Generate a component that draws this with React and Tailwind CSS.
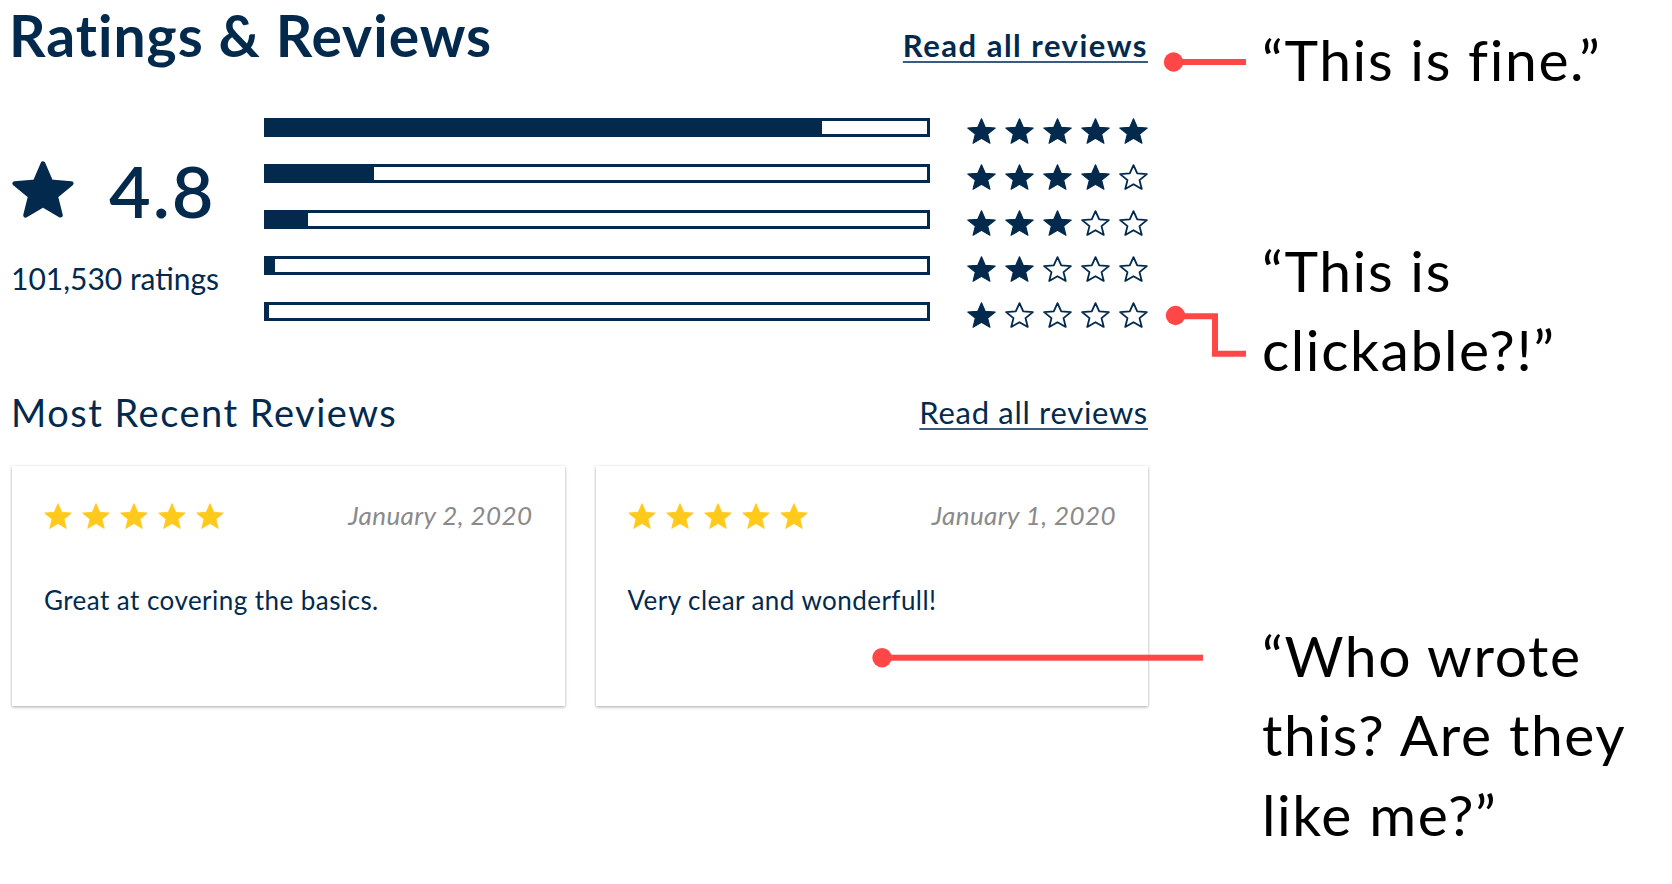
import React from 'react';

const NAVY = '#032a4d';
const STAR_D =
  'M0,-10 L2.645,-3.641 L9.511,-3.09 L4.28,1.391 L5.878,8.09 L0,4.5 L-5.878,8.09 L-4.28,1.391 L-9.511,-3.09 L-2.645,-3.641 Z';

function Star({ w, h, fill, stroke, sw = 1 }) {
  const pad = sw / 2 + 0.15;
  const vb = `${-9.511 - pad} ${-10 - pad} ${19.022 + 2 * pad} ${18.09 + 2 * pad}`;
  return (
    <svg width={w} height={h} viewBox={vb} preserveAspectRatio="none" className="shrink-0">
      <path d={STAR_D} fill={fill} stroke={stroke} strokeWidth={sw} strokeLinejoin="round" />
    </svg>
  );
}

const rows = [
  { fill: 555, stars: 5 },
  { fill: 107, stars: 4 },
  { fill: 41, stars: 3 },
  { fill: 8, stars: 2 },
  { fill: 2, stars: 1 },
];

const reviews = [
  { date: 'January 2, 2020', text: 'Great at covering the basics.' },
  { date: 'January 1, 2020', text: 'Very clear and wonderfull!' },
];

export default function App() {
  return (
    <div className="relative grid h-[884px] w-[1672px] grid-cols-[1148px_1fr] overflow-hidden bg-white font-['Lato','Noto_Sans',sans-serif]">
      {/* Main column */}
      <div className="pl-[12px] pt-[3px] text-[#032a4d]">
        <div className="flex items-baseline justify-between">
          <h1 className="-ml-[3px] text-[57px] font-bold leading-[64px] tracking-[1px]">Ratings &amp; Reviews</h1>
          <a className="text-[31px] font-bold leading-[36px] tracking-[1.5px] underline decoration-[#3b5b80] decoration-2 underline-offset-[4px]">
            Read all reviews
          </a>
        </div>

        <div className="mt-[51px] flex items-start">
          <div className="w-[252px] pt-[36px]">
            <div className="flex items-baseline gap-[35px]">
              <Star w={62} h={57} fill={NAVY} stroke={NAVY} sw={1.6} />
              <span className="text-[72px] font-semibold leading-[72px] tracking-[2px]">4.8</span>
            </div>
            <div className="mt-[34px] -ml-[1px] text-[30px] leading-[36px]">101,530 ratings</div>
          </div>

          <div className="flex flex-col gap-[20px]">
            {rows.map((r, idx) => (
              <div key={idx} className="flex h-[26px] items-start gap-[37px]">
                <div className="h-[19px] w-[666px] border-[3px] border-[#032a4d] bg-white">
                  <div className="h-full bg-[#032a4d]" style={{ width: r.fill }} />
                </div>
                <div className="flex gap-[9px]">
                  {[0, 1, 2, 3, 4].map((i) =>
                    i < r.stars ? (
                      <Star key={i} w={29} h={26} fill={NAVY} stroke={NAVY} sw={0.8} />
                    ) : (
                      <Star key={i} w={29} h={26} fill="#ffffff" stroke={NAVY} sw={1.3} />
                    )
                  )}
                </div>
              </div>
            ))}
          </div>
        </div>

        <div className="mt-[61px] flex items-start justify-between">
          <h2 className="-ml-[1px] text-[38px] leading-[46px] tracking-[1.5px]">Most Recent Reviews</h2>
          <a className="mt-[3px] text-[31px] leading-[40px] tracking-[0.7px] underline decoration-[#3b5b80] decoration-2 underline-offset-[4px]">
            Read all reviews
          </a>
        </div>

        <div className="mt-[31px] grid grid-cols-2 gap-[31px]">
          {reviews.map((rv, i) => (
            <div
              key={i}
              className="h-[240px] bg-white px-[32px] pt-[37px] shadow-[0_1px_3px_rgba(0,0,0,0.35)]"
            >
              <div className="flex items-center justify-between">
                <div className="flex gap-[10px]">
                  {[0, 1, 2, 3, 4].map((s) => (
                    <Star key={s} w={28} h={26} fill="#ffca1b" stroke="#ffca1b" sw={0.6} />
                  ))}
                </div>
                <span className="-mt-[3px] text-[26px] italic leading-[22px] tracking-[0.4px] text-[#8a8a8a]">{rv.date}</span>
              </div>
              <p className="mt-[55px] text-[26px] leading-[32px] tracking-[0.45px]">{rv.text}</p>
            </div>
          ))}
        </div>
      </div>

      {/* Annotation column */}
      <div className="whitespace-nowrap pl-[114px] pt-[20px] text-[57px] leading-[79.5px] tracking-[1.6px] text-black">
        <p>“This is fine.”</p>
        <p className="mt-[131px]">
          “This is
          <br />
          clickable?!”
        </p>
        <p className="mt-[226px]">
          “Who wrote
          <br />
          this? Are they
          <br />
          like me?”
        </p>
      </div>

      {/* Red connectors */}
      <svg className="pointer-events-none absolute left-0 top-0" width="1672" height="884">
        <circle cx="1173.5" cy="62" r="9.7" fill="#ff4747" />
        <rect x="1173" y="59" width="73" height="6" fill="#ff4747" />
        <circle cx="1175.5" cy="315.5" r="9.7" fill="#ff4747" />
        <path d="M1175 316.3 H1215 V353.7 H1246" fill="none" stroke="#ff4747" strokeWidth="6" />
        <circle cx="882" cy="657.7" r="9.7" fill="#ff4747" />
        <rect x="882" y="654.7" width="321" height="6" fill="#ff4747" />
      </svg>
    </div>
  );
}
